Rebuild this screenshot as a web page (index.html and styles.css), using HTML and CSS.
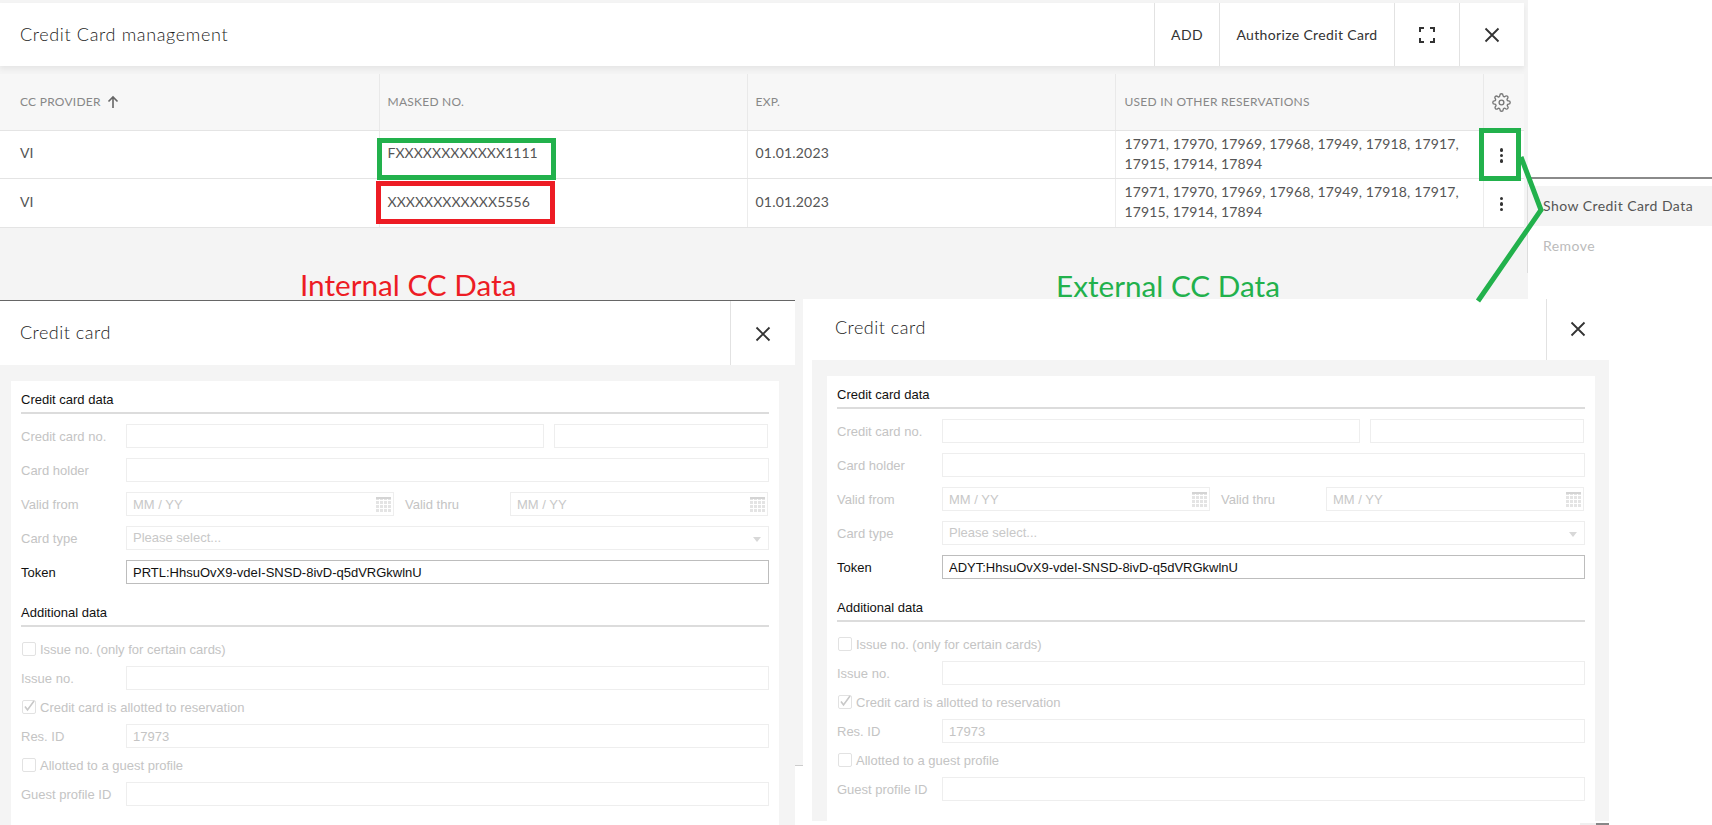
FILE: index.html
```html
<!DOCTYPE html>
<html lang="en">
<head>
    <meta charset="UTF-8">
    <title>Credit Card management</title>
    <link rel="stylesheet" href="styles.css">
</head>
<body>
<div id="page">

    <!-- card list -->
    <div class="window list-window">
        <div class="list-head">
            <span class="list-title">Credit Card management</span>
            <a class="head-btn btn-add">ADD</a>
            <a class="head-btn btn-auth">Authorize Credit Card</a>
            <a class="head-btn btn-icon">
                <svg width="16" height="16" viewBox="0 0 16 16" fill="none" stroke="#333" stroke-width="2"><path d="M1 5V1h4M11 1h4v4M15 11v4h-4M5 15H1v-4"/></svg>
            </a>
            <a class="head-btn btn-icon">
                <svg width="16" height="16" viewBox="0 0 16 16" fill="none" stroke="#333" stroke-width="1.8"><path d="M1.5 1.5l13 13M14.5 1.5l-13 13"/></svg>
            </a>
        </div>
        <table class="cards">
            <colgroup>
                <col class="col-provider"><col class="col-masked"><col class="col-exp"><col class="col-used"><col class="col-tools">
            </colgroup>
            <tr class="cards-head">
                <th>CC PROVIDER
                    <svg class="sort" width="12" height="14" viewBox="0 0 12 14" fill="none" stroke="#666" stroke-width="1.6"><path d="M6 13V2M1.5 6.5L6 2l4.500 4.500"/></svg>
                </th>
                <th>MASKED NO.</th>
                <th>EXP.</th>
                <th class="used">USED IN OTHER RESERVATIONS</th>
                <th class="tools">
                    <svg class="gear" width="19" height="19" viewBox="0 0 24 24" fill="none" stroke="#777" stroke-width="1.7" stroke-linejoin="round"><circle cx="12" cy="12" r="3"/><path d="M19.400 15a1.650 1.650 0 0 0 .33 1.820l.06.06a2 2 0 1 1-2.830 2.830l-.06-.06a1.650 1.650 0 0 0-2.800 1.170V21a2 2 0 1 1-4 0v-.09A1.650 1.650 0 0 0 7.300 19.760l-.06.06a2 2 0 1 1-2.830-2.830l.06-.06A1.650 1.650 0 0 0 3.290 14H3a2 2 0 1 1 0-4h.09A1.650 1.650 0 0 0 4.240 7.300l-.06-.06a2 2 0 1 1 2.830-2.830l.06.06A1.650 1.650 0 0 0 9.900 3.290V3a2 2 0 1 1 4 0v.09a1.650 1.650 0 0 0 2.800 1.170l.06-.06a2 2 0 1 1 2.830 2.830l-.06.06A1.650 1.650 0 0 0 20.710 10H21a2 2 0 1 1 0 4h-.09a1.650 1.650 0 0 0-1.510 1z"/></svg>
                </th>
            </tr>
            <tr class="row-one">
                <td>VI</td>
                <td class="masked">FXXXXXXXXXXXX1111</td>
                <td class="exp">01.01.2023</td>
                <td class="used">17971, 17970, 17969, 17968, 17949, 17918, 17917, 17915, 17914, 17894</td>
                <td class="tools"><span class="kebab"><i></i><i></i><i></i></span></td>
            </tr>
            <tr class="row-two">
                <td>VI</td>
                <td class="masked">XXXXXXXXXXXX5556</td>
                <td class="exp">01.01.2023</td>
                <td class="used">17971, 17970, 17969, 17968, 17949, 17918, 17917, 17915, 17914, 17894</td>
                <td class="tools"><span class="kebab"><i></i><i></i><i></i></span></td>
            </tr>
        </table>
    </div>

    <!-- row menu -->
    <div class="window row-menu">
        <div class="menu-item active">Show Credit Card Data</div>
        <div class="menu-item disabled">Remove</div>
    </div>

    <!-- strip of the page between the two dialogs -->
    <div class="window gutter"></div>

    <!-- dialog with internal data -->
    <div class="window dialog dialog-internal">
        <div class="dialog-head">
            <span class="dialog-title">Credit card</span>
            <a class="dialog-close">
                <svg width="16" height="16" viewBox="0 0 16 16" fill="none" stroke="#333" stroke-width="1.8"><path d="M1.5 1.5l13 13M14.500 1.5l-13 13"/></svg>
            </a>
        </div>
        <div class="dialog-body">
            <div class="form-card">
                <div class="section-title">Credit card data</div>
                <div class="row"><label>Credit card no.</label><input class="field grow" disabled><input class="field part" disabled></div>
                <div class="row"><label>Card holder</label><input class="field grow" disabled></div>
                <div class="row">
                    <label>Valid from</label>
                    <div class="date date-from"><input class="field" placeholder="MM / YY" disabled><span class="cal"></span></div>
                    <label class="thru">Valid thru</label>
                    <div class="date date-thru"><input class="field" placeholder="MM / YY" disabled><span class="cal"></span></div>
                </div>
                <div class="row"><label>Card type</label><div class="select grow">Please select...<span class="caret"></span></div></div>
                <div class="row"><label class="on">Token</label><input class="field grow token" value="PRTL:HhsuOvX9-vdeI-SNSD-8ivD-q5dVRGkwlnU" readonly></div>

                <div class="section-title second">Additional data</div>
                <div class="check"><span class="box"></span>Issue no. (only for certain cards)</div>
                <div class="row"><label>Issue no.</label><input class="field grow" disabled></div>
                <div class="check"><span class="box"><svg width="13" height="13" viewBox="0 0 13 13" fill="none" stroke="#c8c8c8" stroke-width="1.6"><path d="M3 6.500l2.500 3.500L12 1"/></svg></span>Credit card is allotted to reservation</div>
                <div class="row"><label>Res. ID</label><input class="field grow" value="17973" disabled></div>
                <div class="check"><span class="box"></span>Allotted to a guest profile</div>
                <div class="row"><label>Guest profile ID</label><input class="field grow" disabled></div>
            </div>
        </div>
    </div>

    <!-- dialog with external data -->
    <div class="window dialog dialog-external">
        <div class="dialog-head">
            <span class="dialog-title">Credit card</span>
            <a class="dialog-close">
                <svg width="16" height="16" viewBox="0 0 16 16" fill="none" stroke="#333" stroke-width="1.8"><path d="M1.5 1.5l13 13M14.500 1.5l-13 13"/></svg>
            </a>
        </div>
        <div class="dialog-body">
            <div class="form-card">
                <div class="section-title">Credit card data</div>
                <div class="row"><label>Credit card no.</label><input class="field grow" disabled><input class="field part" disabled></div>
                <div class="row"><label>Card holder</label><input class="field grow" disabled></div>
                <div class="row">
                    <label>Valid from</label>
                    <div class="date date-from"><input class="field" placeholder="MM / YY" disabled><span class="cal"></span></div>
                    <label class="thru">Valid thru</label>
                    <div class="date date-thru"><input class="field" placeholder="MM / YY" disabled><span class="cal"></span></div>
                </div>
                <div class="row"><label>Card type</label><div class="select grow">Please select...<span class="caret"></span></div></div>
                <div class="row"><label class="on">Token</label><input class="field grow token" value="ADYT:HhsuOvX9-vdeI-SNSD-8ivD-q5dVRGkwlnU" readonly></div>

                <div class="section-title second">Additional data</div>
                <div class="check"><span class="box"></span>Issue no. (only for certain cards)</div>
                <div class="row"><label>Issue no.</label><input class="field grow" disabled></div>
                <div class="check"><span class="box"><svg width="13" height="13" viewBox="0 0 13 13" fill="none" stroke="#c8c8c8" stroke-width="1.6"><path d="M3 6.500l2.500 3.500L12 1"/></svg></span>Credit card is allotted to reservation</div>
                <div class="row"><label>Res. ID</label><input class="field grow" value="17973" disabled></div>
                <div class="check"><span class="box"></span>Allotted to a guest profile</div>
                <div class="row"><label>Guest profile ID</label><input class="field grow" disabled></div>
            </div>
        </div>
        <div class="dialog-foot"><i class="foot-light"></i><i class="foot-dark"></i></div>
    </div>

    <!-- annotations drawn on the screenshot -->
    <span class="note note-red">Internal CC Data</span>
    <span class="note note-green">External CC Data</span>
    <svg class="marks" width="1712" height="825" fill="none" stroke-width="5">
        <rect x="379.500" y="140.500" width="174" height="37" stroke="#22b14c"/>
        <rect x="378.500" y="183.500" width="174" height="38" stroke="#ed1c24"/>
        <rect x="1481.500" y="130.500" width="37" height="48" stroke="#22b14c"/>
        <path d="M1521 157L1541 210L1478 301" stroke="#22b14c"/>
    </svg>
</div>
</body>
</html>
```

FILE: styles.css
```css
body {
    margin: 0;
    padding: 0;
    background: #fff;
    font-family: Lato, "Open Sans", sans-serif;
}

#page {
    position: relative;
    width: 1712px;
    height: 825px;
    overflow: hidden;
    background: #fff;
}

.window {
    position: absolute;
}

/* list window */
.list-window {
    left: 0;
    top: 0;
    width: 1528px;
    height: 300px;
    padding-top: 3px;
    box-sizing: border-box;
    background: #f4f4f4;
}

.list-head {
    display: flex;
    align-items: stretch;
    width: 1524px;
    height: 63px;
    background: #fff;
    box-shadow: 0 3px 5px rgba(0, 0, 0, .06);
    color: #333;
}

.list-title {
    flex: 1;
    padding-left: 20px;
    font-size: 18px;
    font-weight: 300;
    letter-spacing: .65px;
    line-height: 62px;
    color: #1c1c1c;
}

.head-btn {
    display: flex;
    align-items: center;
    justify-content: center;
    box-sizing: border-box;
    border-left: 1px solid #e2e2e2;
    font-size: 14px;
    letter-spacing: .35px;
    color: #333;
}

.btn-add {
    width: 65px;
}

.btn-auth {
    width: 175px;
}

.btn-icon {
    width: 65px;
    padding-top: 1px;
}

.cards {
    width: 1524px;
    margin-top: 8px;
    border-collapse: collapse;
    table-layout: fixed;
    font-size: 14px;
    color: #555;
}

.col-provider {
    width: 379px;
}

.col-masked {
    width: 368px;
}

.col-exp {
    width: 368px;
}

.col-used {
    width: 368px;
}

.col-tools {
    width: 41px;
}

.cards th, .cards td {
    padding: 0 8px;
    text-align: left;
    border-left: 1px solid #ececec;
    border-bottom: 1px solid #e4e4e4;
    font-weight: normal;
}

.cards th:first-child, .cards td:first-child {
    padding-left: 20px;
    border-left: 0;
}

.cards-head {
    height: 56px;
    background: #f7f7f7;
}

.cards-head th {
    font-size: 12px;
    letter-spacing: .25px;
    color: #888;
    border-left-color: #e9e9e9;
}

.row-one {
    height: 48px;
    background: #fff;
}

.row-two {
    height: 49px;
    background: #fff;
}

.cards td {
    padding-bottom: 4px;
}

.row-two td {
    padding-bottom: 3px;
}

.cards .exp {
    letter-spacing: .2px;
}

.cards .masked {
    letter-spacing: .05px;
}

.cards .used {
    padding-left: 9px;
}

.cards td.used {
    padding-bottom: 0;
    letter-spacing: .13px;
    line-height: 20px;
}

.row-two td.used {
    padding-bottom: 2px;
}

.cards .tools {
    padding: 0 5px 0 0;
    text-align: center;
}

.sort {
    margin-left: 3px;
    vertical-align: -3px;
}

.gear {
    margin-top: 2px;
    vertical-align: middle;
}

.kebab {
    display: inline-flex;
    flex-direction: column;
    gap: 2px;
    vertical-align: middle;
}

.kebab i {
    width: 3.500px;
    height: 3.500px;
    border-radius: 50%;
    background: #333;
}

/* popup menu */
.row-menu {
    left: 1527px;
    top: 177px;
    width: 185px;
    height: 96px;
    padding-top: 7px;
    box-sizing: border-box;
    background: #fff;
    border-top: 2px solid #8a8a8a;
    border-left: 1px solid #ddd;
}

.menu-item {
    height: 40px;
    padding-left: 15px;
    font-size: 14px;
    letter-spacing: .45px;
    line-height: 40px;
    color: #555;
}

.menu-item.active {
    background: #f4f4f4;
}

.menu-item.disabled {
    color: #bbb;
}

.gutter {
    left: 795px;
    top: 300px;
    width: 8px;
    height: 465px;
    background: #f4f4f4;
    border-bottom: 1px solid #ccc;
}

/* dialogs */
.dialog {
    display: flex;
    flex-direction: column;
    background: #fff;
}

.dialog-internal {
    left: 0;
    top: 300px;
    width: 795px;
    height: 525px;
    border-top: 1px solid #666;
    box-sizing: border-box;
}

.dialog-external {
    left: 803px;
    top: 299px;
    width: 806px;
    height: 526px;
}

.dialog-head {
    display: flex;
    flex: none;
    background: #fff;
}

.dialog-internal .dialog-head {
    height: 64px;
}

.dialog-external .dialog-head {
    height: 61px;
}

.dialog-title {
    flex: 1;
    font-size: 18px;
    font-weight: 300;
    letter-spacing: .5px;
    line-height: 62px;
    color: #1c1c1c;
}

.dialog-internal .dialog-title {
    padding-left: 20px;
}

.dialog-external .dialog-title {
    padding-left: 32px;
    line-height: 56px;
}

.dialog-close {
    display: flex;
    align-items: center;
    justify-content: center;
    border-left: 1px solid #e2e2e2;
}

.dialog-internal .dialog-close {
    width: 64px;
    padding-top: 1px;
}

.dialog-external .dialog-close {
    width: 62px;
}

.dialog-external .dialog-close svg {
    margin-top: -2px;
}

.dialog-body {
    flex: 1;
    min-height: 0;
    padding-top: 16px;
    background: #f4f4f4;
}

.dialog-internal .dialog-body {
    padding-left: 11px;
}

.dialog-external .dialog-body {
    margin-left: 9px;
    padding-left: 15px;
}

.form-card {
    box-sizing: border-box;
    width: 768px;
    height: 100%;
    padding: 0 10px;
    background: #fff;
    font-family: "Liberation Sans", Arial, sans-serif;
    font-size: 13px;
    color: #c4c4c4;
}

.section-title {
    height: 31px;
    margin-bottom: 10px;
    border-bottom: 2px solid #dcdcdc;
    color: #111;
    line-height: 37px;
}

.section-title.second {
    margin-bottom: 5px;
}

.row {
    display: flex;
    align-items: center;
    height: 24px;
    margin-bottom: 10px;
}

.row label {
    flex: none;
    width: 105px;
}

.row label.thru {
    margin-left: 11px;
    width: 105px;
}

.row label.on {
    color: #111;
}

/* these rows follow a checkbox line */
.check + .row {
    margin-bottom: 0;
}

.field {
    box-sizing: border-box;
    height: 24px;
    padding: 0 6px;
    border: 1px solid #eee;
    background: #fff;
    font-family: inherit;
    font-size: 13px;
    color: #c4c4c4;
    min-width: 0;
}

.field::placeholder {
    color: #c8c8c8;
}

.grow {
    flex: 1;
}

.part {
    width: 214px;
    margin: 0 1px 0 10px;
}

.token {
    border-color: #bdbdbd;
    color: #111;
}

.date {
    position: relative;
    height: 24px;
}

.date .field {
    width: 100%;
}

.date-from {
    width: 268px;
}

.date-thru {
    width: 258px;
}

.cal {
    position: absolute;
    right: 3px;
    top: 5px;
    width: 15px;
    height: 15px;
    background:
        linear-gradient(#d4d4d4 2px, transparent 2px),
        repeating-linear-gradient(90deg, #e4e4e4 0, #e4e4e4 3px, #fff 3px, #fff 4px),
        #e4e4e4;
    -webkit-mask: repeating-linear-gradient(#000 0, #000 3px, transparent 3px, transparent 4px);
}

.select {
    position: relative;
    box-sizing: border-box;
    height: 24px;
    padding-left: 6px;
    border: 1px solid #eee;
    line-height: 22px;
    color: #c8c8c8;
}

.caret {
    position: absolute;
    right: 7px;
    top: 10px;
    border: 4px solid transparent;
    border-top: 5px solid #d8d8d8;
    border-bottom: 0;
}

.check {
    display: flex;
    align-items: center;
    height: 34px;
}

.box {
    box-sizing: border-box;
    width: 14px;
    height: 14px;
    margin: 0 4px 0 1px;
    border: 1px solid #e2e2e2;
    border-radius: 2px;
}

.box svg {
    display: block;
    margin: -1px 0 0 -1px;
}

.dialog-foot {
    flex: none;
    display: flex;
    align-items: flex-end;
    justify-content: flex-end;
    height: 4px;
    background: #fff;
}

.foot-light {
    width: 16px;
    height: 2px;
    background: #f0f0f0;
}

.foot-dark {
    width: 13px;
    height: 2px;
    background: #888;
}

/* annotations */
.note {
    position: absolute;
    font-family: Lato, sans-serif;
    font-size: 29.700px;
    line-height: 36px;
    white-space: nowrap;
}

.note-red {
    left: 300px;
    top: 267px;
    color: #ed1c24;
}

.note-green {
    left: 1056px;
    top: 268px;
    color: #22b14c;
}

.marks {
    position: absolute;
    left: 0;
    top: 0;
    pointer-events: none;
}
```
